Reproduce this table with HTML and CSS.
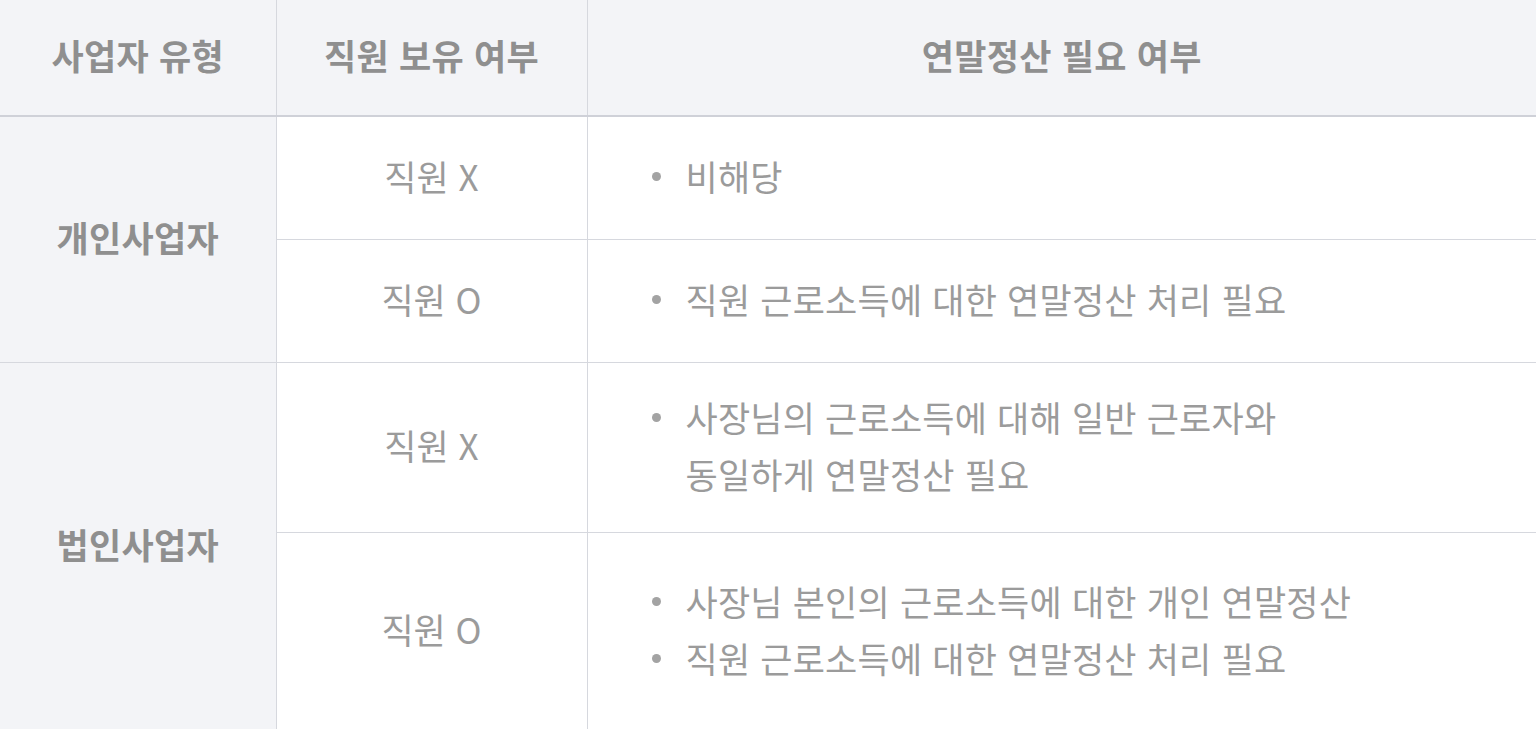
FILE: index.html
```html
<!DOCTYPE html>
<html lang="ko">
<head>
<meta charset="utf-8">
<link rel="stylesheet" href="styles.css">
</head>
<body>
<table class="tax">
  <colgroup>
    <col class="c1"><col class="c2"><col class="c3">
  </colgroup>
  <thead>
    <tr class="head">
      <th>사업자 유형</th>
      <th>직원 보유 여부</th>
      <th>연말정산 필요 여부</th>
    </tr>
  </thead>
  <tbody>
    <tr class="r1">
      <th rowspan="2" class="type">개인사업자</th>
      <td class="emp">직원 X</td>
      <td class="need"><ul><li>비해당</li></ul></td>
    </tr>
    <tr class="r2">
      <td class="emp">직원 O</td>
      <td class="need"><ul><li>직원 근로소득에 대한 연말정산 처리 필요</li></ul></td>
    </tr>
    <tr class="r3">
      <th rowspan="2" class="type">법인사업자</th>
      <td class="emp">직원 X</td>
      <td class="need"><ul><li>사장님의 근로소득에 대해 일반 근로자와<br>동일하게 연말정산 필요</li></ul></td>
    </tr>
    <tr class="r4">
      <td class="emp">직원 O</td>
      <td class="need"><ul><li>사장님 본인의 근로소득에 대한 개인 연말정산</li><li>직원 근로소득에 대한 연말정산 처리 필요</li></ul></td>
    </tr>
  </tbody>
</table>
</body>
</html>
```
FILE: styles.css
```css
html, body {
  margin: 0;
  padding: 0;
  background: #ffffff;
  overflow: hidden;
}
body {
  font-family: "Noto Sans CJK KR", "Noto Sans", sans-serif;
  width: 1536px;
  height: 729px;
}
.tax {
  width: 1536px;
  border-collapse: collapse;
  table-layout: fixed;
}
.c1 { width: 276px; }
.c2 { width: 311px; }
.c3 { width: auto; }
.tax th, .tax td {
  box-sizing: border-box;
  border-right: 1px solid #d6d8de;
  border-bottom: 1px solid #d6d8de;
  padding: 0 0 4px 0;
  vertical-align: middle;
  line-height: 40px;
}
.tax th:last-child, .tax td:last-child { border-right: none; }
.head th {
  background: #f3f4f7;
  height: 116px;
  padding-bottom: 6px;
  font-size: 35px;
  font-weight: 700;
  color: #8f8f8f;
  text-align: center;
  border-bottom: 2px solid #cfd1d8;
  letter-spacing: 0.3px;
}
.type {
  background: #f3f4f7;
  font-size: 35px;
  font-weight: 700;
  color: #8f8f8f;
  text-align: center;
  letter-spacing: 0.3px;
}
.emp {
  font-size: 35px;
  color: #9b9b9b;
  text-align: center;
  font-weight: 400;
}
.need {
  font-size: 35px;
  color: #9b9b9b;
  font-weight: 400;
  padding-left: 64px !important;
  letter-spacing: 0.2px;
}
.r1 td, .r1 th { height: 123px; }
.r2 td { height: 123px; }
.r3 td, .r3 th { height: 170px; }
.r4 td { height: 197px; }
.need ul {
  list-style: none;
  margin: 0;
  padding: 0;
}
.need li {
  position: relative;
  padding-left: 34px;
  line-height: 57px;
}
.need li::before {
  content: "";
  position: absolute;
  left: 0;
  top: 25px;
  width: 9px;
  height: 9px;
  border-radius: 50%;
  background: #a3a3a3;
}
```
